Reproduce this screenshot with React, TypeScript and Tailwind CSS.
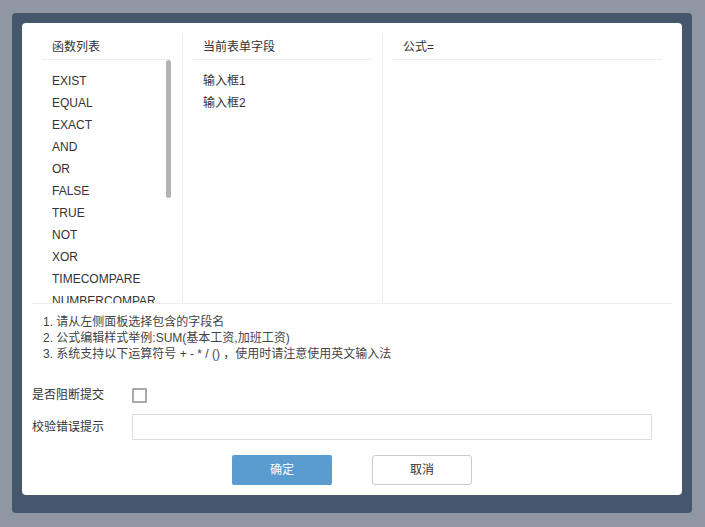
import React from 'react';

const FUNCS = ['EXIST', 'EQUAL', 'EXACT', 'AND', 'OR', 'FALSE', 'TRUE', 'NOT', 'XOR', 'TIMECOMPARE', 'NUMBERCOMPARE'];
const FIELDS = ['输入框1', '输入框2'];

export default function App() {
  return (
    <div
      className="w-[705px] h-[527px] bg-[#8e97a3] pt-[13px] pl-[12px] text-[12px] text-[#333]"
      style={{ fontFamily: '"Liberation Sans", "Noto Sans CJK SC", sans-serif' }}
    >
      <div className="w-[680px] h-[500px] bg-[#46566b] rounded-[4px] p-[10px]">
        <div className="h-[472px] bg-white rounded-[4px] p-[10px]">
          {/* 三栏 */}
          <div className="flex h-[271px] border-b border-[#eeeeee]">
            <div className="w-[151px] border-r border-[#eeeeee] pl-[10px] pr-[11px] flex flex-col">
              <div className="h-[27px] border-b border-[#eeeeee] pl-[10px] pt-[1px] flex items-center">函数列表</div>
              <div className="relative flex-1 overflow-hidden pt-[10px] pl-[10px]">
                {FUNCS.map(f => (
                  <div key={f} className="h-[22px] leading-[22px] w-[104px] overflow-hidden whitespace-nowrap">{f}</div>
                ))}
                <div className="absolute right-0 top-0 w-[5px] h-[138px] bg-[#b3b3b3] rounded-[3px]" />
              </div>
            </div>
            <div className="w-[200px] border-r border-[#eeeeee] px-[10px] flex flex-col">
              <div className="h-[27px] border-b border-[#eeeeee] pl-[10px] pt-[1px] flex items-center">当前表单字段</div>
              <div className="pt-[10px] pl-[10px]">
                {FIELDS.map(f => (
                  <div key={f} className="h-[22px] leading-[22px]">{f}</div>
                ))}
              </div>
            </div>
            <div className="flex-1 px-[10px] flex flex-col">
              <div className="h-[27px] border-b border-[#eeeeee] pl-[10px] pt-[1px] flex items-center">公式=</div>
            </div>
          </div>

          {/* 说明 */}
          <div className="pt-[10px] pl-[11px] leading-[16px] text-[#444]">
            <div>1. 请从左侧面板选择包含的字段名</div>
            <div>2. 公式编辑样式举例:SUM(基本工资,加班工资)</div>
            <div>3. 系统支持以下运算符号 + - * / () ，使用时请注意使用英文输入法</div>
          </div>

          {/* 表单 */}
          <div className="mt-[20px] flex items-center h-[26px]">
            <div className="w-[100px]">是否阻断提交</div>
            <div className="w-[15px] h-[15px] border-2 border-[#a8a8a8] rounded-[1px]" />
          </div>
          <div className="mt-[6px] flex items-center h-[26px]">
            <div className="w-[100px]">校验错误提示</div>
            <input type="text" className="w-[520px] h-[26px] border border-[#dddddd] outline-none px-2" />
          </div>

          <div className="mt-[15px] flex justify-center gap-[40px]">
            <button className="w-[100px] h-[30px] bg-[#5a9bd0] text-white rounded-[2px]">确定</button>
            <button className="w-[100px] h-[30px] bg-white border border-[#cccccc] rounded-[3px] text-[#333]">取消</button>
          </div>
        </div>
      </div>
    </div>
  );
}
